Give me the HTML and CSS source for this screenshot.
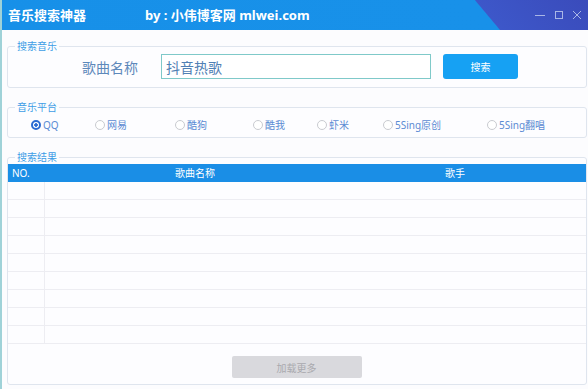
FILE: index.html
```html
<!DOCTYPE html>
<html lang="zh-CN">
<head>
  <meta charset="UTF-8" />
  <title>音乐搜索神器</title>
  <link rel="stylesheet" href="styles.css">
</head>
<body>
  <div class="window">
    <div class="titlebar">
      <span class="app-name">音乐搜索神器</span>
      <span class="author">by : 小伟博客网 mlwei.com</span>
      <div class="win-controls">
        <svg width="12" height="10" viewBox="0 0 12 10"><path d="M1 5.5h10" stroke="currentColor" stroke-width="1"/></svg>
        <svg width="10" height="10" viewBox="0 0 10 10"><rect x="1.5" y="1.5" width="7" height="7" fill="none" stroke="currentColor" stroke-width="1"/></svg>
        <svg width="10" height="10" viewBox="0 0 10 10"><path d="M1 1l8 8M9 1l-8 8" stroke="currentColor" stroke-width="1"/></svg>
      </div>
    </div>

    <div class="main">
      <fieldset class="group search-group">
        <legend>搜索音乐</legend>
        <div class="search-row">
          <label class="song-label">歌曲名称</label>
          <input class="song-input" type="text" value="抖音热歌" />
          <button class="search-btn">搜索</button>
        </div>
      </fieldset>

      <fieldset class="group platform-group">
        <legend>音乐平台</legend>
        <div class="platforms">
          <label class="platform"><span class="radio checked"></span>QQ</label>
          <label class="platform"><span class="radio"></span>网易</label>
          <label class="platform"><span class="radio"></span>酷狗</label>
          <label class="platform"><span class="radio"></span>酷我</label>
          <label class="platform"><span class="radio"></span>虾米</label>
          <label class="platform"><span class="radio"></span>5Sing原创</label>
          <label class="platform"><span class="radio"></span>5Sing翻唱</label>
        </div>
      </fieldset>

      <fieldset class="group result-group">
        <legend>搜索结果</legend>
        <div class="result-table">
          <div class="row thead">
            <span class="cell no">NO.</span>
            <span class="cell song">歌曲名称</span>
            <span class="cell singer">歌手</span>
          </div>
          <div class="row"><span class="cell no"></span><span class="cell song"></span><span class="cell singer"></span></div>
          <div class="row"><span class="cell no"></span><span class="cell song"></span><span class="cell singer"></span></div>
          <div class="row"><span class="cell no"></span><span class="cell song"></span><span class="cell singer"></span></div>
          <div class="row"><span class="cell no"></span><span class="cell song"></span><span class="cell singer"></span></div>
          <div class="row"><span class="cell no"></span><span class="cell song"></span><span class="cell singer"></span></div>
          <div class="row"><span class="cell no"></span><span class="cell song"></span><span class="cell singer"></span></div>
          <div class="row"><span class="cell no"></span><span class="cell song"></span><span class="cell singer"></span></div>
          <div class="row"><span class="cell no"></span><span class="cell song"></span><span class="cell singer"></span></div>
          <div class="row"><span class="cell no"></span><span class="cell song"></span><span class="cell singer"></span></div>
        </div>
        <div class="more">
          <button class="more-btn">加载更多</button>
        </div>
      </fieldset>
    </div>
  </div>
</body>
</html>
```

FILE: styles.css
```css
html, body {
  margin: 0;
  padding: 0;
}
body {
  font-family: "Noto Sans", "Noto Sans CJK SC", sans-serif;
  background: #fcfcfe;
}
.window {
  width: 586px;
  height: 389px;
  border-left: 2px solid #9fd2d8;
  background: #fcfcfe;
  overflow: hidden;
}
.titlebar {
  height: 30px;
  display: flex;
  align-items: center;
  padding-left: 6px;
  color: #fff;
  font-weight: bold;
  font-size: 13px;
  line-height: 16px;
  background: linear-gradient(50deg, #1790e8 0, #1891e9 381px, #3d57c9 382px, #3a4bbb 100%);
}
.app-name {
  width: 137px;
}
.win-controls {
  margin-left: auto;
  display: flex;
  align-items: center;
  gap: 8px;
  padding-right: 6px;
  color: #a9b6e6;
}
.main {
  padding: 10px 1px 0 5px;
}
.group {
  margin: 0;
  padding: 0;
  border: 1px solid #dfe5ee;
  border-radius: 3px;
  background: #fdfdff;
}
.group legend {
  margin-left: 7px;
  padding: 0 2px;
  font-size: 10px;
  line-height: 12px;
  color: #3e9de6;
}
.search-group {
  padding: 2px 0 8px 0;
}
.search-row {
  display: flex;
  align-items: center;
  height: 25px;
  padding-left: 74px;
}
.song-label {
  font-size: 14px;
  color: #5d88ba;
  width: 79px;
}
.song-input {
  box-sizing: border-box;
  width: 270px;
  height: 25px;
  border: 1px solid #7fc9c9;
  padding: 0 4px;
  font-family: "Noto Sans CJK SC", sans-serif;
  font-size: 14px;
  color: #5080b4;
  background: #fff;
  outline: none;
}
.search-btn {
  margin-left: 12px;
  width: 75px;
  height: 25px;
  border: none;
  border-radius: 3px;
  background: #16a1f3;
  color: #fff;
  font-family: "Noto Sans CJK SC", sans-serif;
  font-size: 10px;
}
.platform-group {
  margin-top: 13px;
  padding: 5px 0 5px 0;
}
.platforms {
  display: grid;
  grid-template-columns: 64px 80px 78px 64px 66px 104px auto;
  padding-left: 23px;
  line-height: 14px;
  font-size: 10px;
  color: #5b8bd3;
}
.platform {
  display: flex;
  align-items: center;
}
.radio {
  box-sizing: border-box;
  width: 10px;
  height: 10px;
  margin-right: 2px;
  border: 1px solid #c9cbd0;
  border-radius: 50%;
  background: #fff;
}
.radio.checked {
  border: 2px solid #2b6bd2;
  background: radial-gradient(circle, #2b6bd2 0, #2b6bd2 1.5px, #fff 2px);
}
.result-group {
  margin-top: 13px;
  padding: 1px 0 6px 0;
}
.result-table {
  font-size: 10px;
}
.row {
  display: grid;
  grid-template-columns: 37px 300px 220px auto;
  height: 18px;
  border-bottom: 1px solid #ededf2;
  box-sizing: border-box;
}
.row .no {
  border-right: 1px solid #ededf2;
}
.thead {
  background: #1a8ee6;
  color: #fff;
  line-height: 18px;
  border-bottom: none;
}
.thead .no {
  padding-left: 4px;
  border-right: none;
}
.thead .song,
.thead .singer {
  text-align: center;
}
.more {
  display: flex;
  justify-content: center;
  margin-top: 12px;
  padding-right: 1px;
}
.more-btn {
  width: 130px;
  height: 22px;
  border: none;
  border-radius: 2px;
  background: #d9d9dd;
  color: #a9a9ae;
  font-family: "Noto Sans CJK SC", sans-serif;
  font-size: 10px;
}
```
